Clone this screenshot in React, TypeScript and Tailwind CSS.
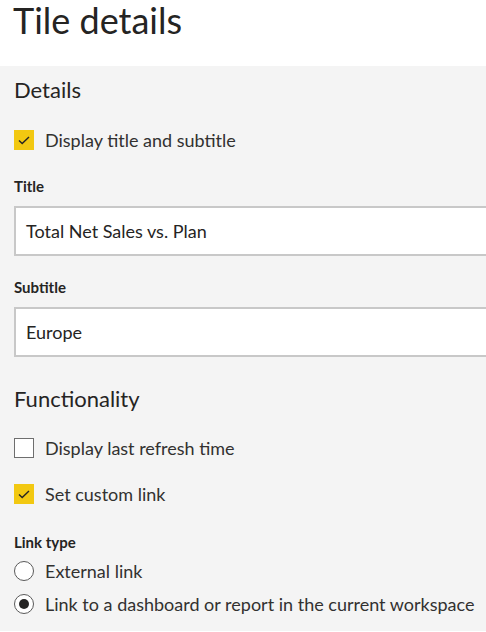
import React from "react";

const font = { fontFamily: 'Lato, "Open Sans", sans-serif' };

function CheckBox({ checked }: { checked: boolean }) {
  if (checked) {
    return (
      <div className="w-[20px] h-[20px] bg-[#f2c811] flex items-center justify-center shrink-0">
        <svg width="12" height="9" viewBox="0 0 12 9" fill="none">
          <path d="M1 4.5 L4.2 7.6 L11 1" stroke="#252423" strokeWidth="1.4" />
        </svg>
      </div>
    );
  }
  return <div className="w-[20px] h-[20px] bg-white border-[1.5px] border-[#6e6e6e] shrink-0" />;
}

function Radio({ selected }: { selected: boolean }) {
  return (
    <div className="w-[20px] h-[20px] rounded-full bg-white border-[1.5px] border-[#5a5a5a] flex items-center justify-center shrink-0">
      {selected && <div className="w-[10px] h-[10px] rounded-full bg-[#252423]" />}
    </div>
  );
}

function Row({ children, label }: { children: React.ReactNode; label: string }) {
  return (
    <div className="flex items-center h-[20px] gap-[11px]">
      {children}
      <span className="text-[18px] leading-[20px] text-[#323130] whitespace-nowrap">{label}</span>
    </div>
  );
}

function Input({ value }: { value: string }) {
  return (
    <div className="h-[50px] border-2 border-r-0 border-[#c8c8c8] bg-white flex items-center pl-[10px]">
      <span className="text-[18px] leading-[20px] text-[#252423]">{value}</span>
    </div>
  );
}

export default function App() {
  return (
    <div className="w-[486px] h-[632px] bg-white overflow-hidden" style={font}>
      <div className="h-[66px] px-[13px] pt-[1px]">
        <h1 className="text-[36px] leading-[38px] font-normal text-[#252423]">Tile details</h1>
      </div>
      <div className="bg-[#f4f4f4] pl-[14px] pt-[10px] pb-[17px] flex flex-col">
        <h2 className="text-[22px] leading-[28px] text-[#252423]">Details</h2>
        <div className="mt-[26px]">
          <Row label="Display title and subtitle">
            <CheckBox checked />
          </Row>
        </div>
        <div className="mt-[26px] text-[15px] leading-[20px] font-bold text-[#252423]">Title</div>
        <div className="mt-[10px]">
          <Input value="Total Net Sales vs. Plan" />
        </div>
        <div className="mt-[21px] text-[15px] leading-[20px] font-bold text-[#252423]">Subtitle</div>
        <div className="mt-[10px]">
          <Input value="Europe" />
        </div>
        <h2 className="mt-[28px] text-[22px] leading-[28px] text-[#252423]">Functionality</h2>
        <div className="mt-[25px]">
          <Row label="Display last refresh time">
            <CheckBox checked={false} />
          </Row>
        </div>
        <div className="mt-[26px]">
          <Row label="Set custom link">
            <CheckBox checked />
          </Row>
        </div>
        <div className="mt-[28px] text-[15px] leading-[20px] font-bold text-[#252423]">Link type</div>
        <div className="mt-[9px]">
          <Row label="External link">
            <Radio selected={false} />
          </Row>
        </div>
        <div className="mt-[13px]">
          <Row label="Link to a dashboard or report in the current workspace">
            <Radio selected />
          </Row>
        </div>
      </div>
    </div>
  );
}
